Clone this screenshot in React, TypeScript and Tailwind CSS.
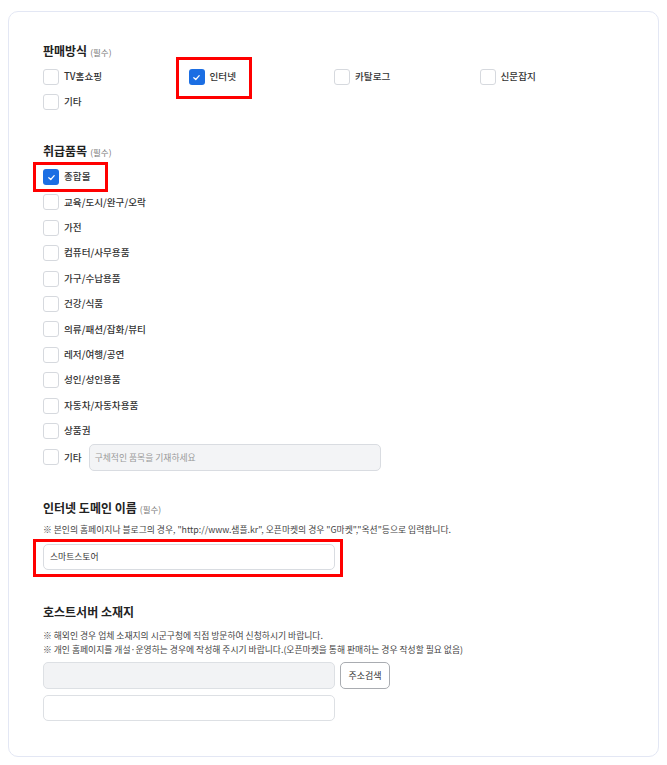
import React from "react";

const font = { fontFamily: '"Noto Sans CJK KR", "Noto Sans", sans-serif' };

function Box({ checked }: { checked?: boolean }) {
  if (checked) {
    return (
      <span className="flex h-4 w-4 shrink-0 items-center justify-center rounded-[3px] bg-[#1b6ee3]">
        <svg width="9" height="9" viewBox="0 0 10 10" fill="none">
          <path d="M2 5.2 L4.2 7.2 L8 3" stroke="white" strokeWidth="1.4" strokeLinecap="round" strokeLinejoin="round" />
        </svg>
      </span>
    );
  }
  return <span className="block h-4 w-4 shrink-0 rounded-[3px] border border-[#d6d9de] bg-white" />;
}

function Item({ label, checked, children }: { label: string; checked?: boolean; children?: React.ReactNode }) {
  return (
    <div className="relative flex h-4 items-center gap-[5px]">
      <Box checked={checked} />
      <span className="text-[9.6px] font-medium leading-none text-[#333]">{label}</span>
      {children}
    </div>
  );
}

function Title({ text, req }: { text: string; req?: boolean }) {
  return (
    <div className="flex h-4 items-baseline gap-[3px]">
      <span className="text-[12px] font-bold leading-none text-[#222]">{text}</span>
      {req && <span className="text-[8.5px] leading-none text-[#777]">(필수)</span>}
    </div>
  );
}

const Red = ({ cls }: { cls: string }) => <div className={"pointer-events-none absolute border-[3px] border-[#ff0000] " + cls} />;

export default function App() {
  const items = [
    "교육/도시/완구/오락",
    "가전",
    "컴퓨터/사무용품",
    "가구/수납용품",
    "건강/식품",
    "의류/패션/잡화/뷰티",
    "레저/여행/공연",
    "성인/성인용품",
    "자동차/자동차용품",
    "상품권",
  ];
  return (
    <div className="h-[765px] w-[667px] bg-white pl-[8px] pt-[11px]" style={font}>
      <div className="h-[746px] w-[651px] rounded-[10px] border border-[#e3e7f4] pl-[34px] pt-[33px]">
        {/* 판매방식 */}
        <Title text="판매방식" req />
        <div className="mt-[8px] grid w-[582px] grid-cols-4 gap-y-[9px]">
          <Item label="TV홈쇼핑" />
          <Item label="인터넷" checked>
            <Red cls="-left-[13px] -top-[12px] h-[42px] w-[76px]" />
          </Item>
          <Item label="카탈로그" />
          <Item label="신문잡지" />
          <Item label="기타" />
        </div>

        {/* 취급품목 */}
        <div className="mt-[35px]">
          <Title text="취급품목" req />
        </div>
        <div className="mt-[8px] flex flex-col gap-[9.4px]">
          <Item label="종합몰" checked>
            <Red cls="-left-[10px] -top-[7px] h-[30px] w-[75px]" />
          </Item>
          {items.map((t) => (
            <Item key={t} label={t} />
          ))}
        </div>
        <div className="mt-[5px] flex h-[27px] items-center gap-[5px]">
          <Box />
          <span className="text-[9.6px] font-medium leading-none text-[#333]">기타</span>
          <div className="ml-[2px] flex h-[27px] w-[292px] items-center rounded-[5px] border border-[#d9dce1] bg-[#f3f4f6] px-[5px]">
            <span className="text-[8.8px] text-[#999]">구체적인 품목을 기재하세요</span>
          </div>
        </div>

        {/* 인터넷 도메인 이름 */}
        <div className="mt-[31px]">
          <Title text="인터넷 도메인 이름" req />
        </div>
        <div className="mt-[6px] h-[12px] text-[8.8px] leading-[12px] text-[#444]">
          ※ 본인의 홈페이지나 블로그의 경우, "http://www.샘플.kr", 오픈마켓의 경우 "G마켓","옥션"등으로 입력합니다.
        </div>
        <div className="relative mt-[8px] flex h-[26px] w-[292px] items-center rounded-[5px] border border-[#d9dce1] bg-white px-[6px]">
          <span className="text-[8.8px] text-[#333]">스마트스토어</span>
          <Red cls="-left-[11px] -top-[6px] h-[38px] w-[310px]" />
        </div>

        {/* 호스트서버 소재지 */}
        <div className="mt-[36px]">
          <Title text="호스트서버 소재지" />
        </div>
        <div className="mt-[8px] flex flex-col gap-[2px] text-[8.8px] leading-[12px] text-[#444]">
          <div>※ 해외인 경우 업체 소재지의 시군구청에 직접 방문하여 신청하시기 바랍니다.</div>
          <div>※ 개인 홈페이지를 개설·운영하는 경우에 작성해 주시기 바랍니다.(오픈마켓을 통해 판매하는 경우 작성할 필요 없음)</div>
        </div>
        <div className="mt-[6px] flex gap-[5px]">
          <div className="h-[27px] w-[292px] rounded-[5px] border border-[#dde0e4] bg-[#f2f3f5]" />
          <div className="flex h-[27px] w-[50px] items-center justify-center rounded-[5px] border border-[#a9acb1] bg-white text-[9px] text-[#333]">
            주소검색
          </div>
        </div>
        <div className="mt-[6px] h-[26px] w-[292px] rounded-[5px] border border-[#dde0e4] bg-white" />
      </div>
    </div>
  );
}
